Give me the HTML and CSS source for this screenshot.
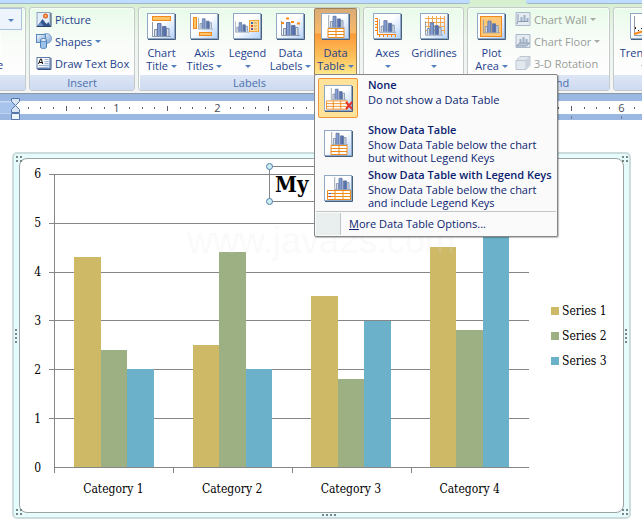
FILE: index.html
```html
<!DOCTYPE html>
<html lang="en">
<head>
<meta charset="utf-8">
<title>Chart Layout</title>
<link rel="stylesheet" href="styles.css">
</head>
<body>
<svg class="defs" aria-hidden="true">
  <defs>
    <linearGradient id="paper" x1="0" y1="0" x2="1" y2="1"><stop offset=".45" stop-color="#fff"/><stop offset="1" stop-color="#b4d2fb"/></linearGradient>
    <linearGradient id="bar" x1="0" y1="0" x2="1" y2="0"><stop offset="0" stop-color="#8fa9dc"/><stop offset="1" stop-color="#4a659f"/></linearGradient>
    <linearGradient id="steel" x1="0" y1="0" x2="1" y2="1"><stop offset="0" stop-color="#f4faff"/><stop offset="1" stop-color="#78a4d2"/></linearGradient>
    <symbol id="tile" viewBox="0 0 29 27">
      <path d="M28.5 1v25.500H1" fill="none" stroke="#48607f"/>
      <rect x=".5" y=".5" width="27" height="25" fill="url(#paper)" stroke="#91a9c6"/>
    </symbol>
    <symbol id="bars" viewBox="0 0 19 15">
      <path d="M.5 0v14.500H19" fill="none" stroke="#8f99a8"/>
      <path d="M2.500 14V7.500H5V14M14.500 14V6.500H17V14" fill="#d8dde6" stroke="#7d8fae"/>
      <path d="M5.500 14V1.500H9V14M10.500 14V4.500H14V14" fill="url(#bar)" stroke="#6277a3"/>
    </symbol>
    <symbol id="cells2" viewBox="0 0 18 10">
      <path d="M1 .5h16v9H1zM1 3.500h16M1 6.500h16M9 .5v9" fill="#fff" stroke="#f08a1c"/>
    </symbol>
    <symbol id="cells3" viewBox="0 0 24 10">
      <path d="M.5 .5h23v9H.5zM.5 3.500h23M.5 6.500h23M8 .5v9M16 .5v9" fill="#fff" stroke="#f08a1c"/>
    </symbol>
  </defs>
</svg>

<header class="ribbon">
  <div class="tab-strip"><span class="tab-edge"></span><span class="active-tab"></span><span class="tab-rest"></span></div>
  <div class="groups">
    <section class="group styles-group">
      <div class="group-body"><button class="combo" aria-label="Element list"><i class="arrow"></i></button><span class="cut-label">e</span></div>
      <h2></h2>
    </section>

    <section class="group insert-group">
      <div class="group-body stack">
        <button class="row-button">
          <svg width="15" height="15" viewBox="0 0 15 15"><rect x=".5" y=".5" width="13" height="13" fill="#e3eefb" stroke="#8fa3bf"/><path d="M14.500 1v13.500H0" fill="none" stroke="#2c4368"/><path d="M1 14l5-7 4 5 2-2 2 4z" fill="#35538f"/><path d="M1 14l3-4 3 4z" fill="#6c8fc4"/><circle cx="9" cy="4" r="2.500" fill="#e8641b"/><circle cx="9" cy="4" r="1" fill="#ffd9a0"/></svg>
          Picture</button>
        <button class="row-button">
          <svg width="16" height="16" viewBox="0 0 16 16"><circle cx="10.500" cy="5.500" r="5" fill="url(#steel)" stroke="#7fa3cc"/><rect x=".5" y="1.500" width="9" height="8" fill="url(#steel)" stroke="#5687bd"/><path d="M4.500 7v7c0 2 6 2 6 0V7" fill="#9dc3ea" stroke="#4b7fb8"/><ellipse cx="7.500" cy="7" rx="3" ry="1.500" fill="#eef7ff" stroke="#4b7fb8"/></svg>
          Shapes <i class="arrow"></i></button>
        <button class="row-button">
          <svg width="15" height="13" viewBox="0 0 15 13"><rect x=".5" y=".5" width="13" height="11" fill="url(#paper)" stroke="#5c7baa"/><path d="M14.500 1v11.500H1" fill="none" stroke="#3b5580"/><path d="M2 7l2-5h1l1 5M3 5.500h3" fill="none" stroke="#111"/><path d="M8 2.500h4M8 4.500h4M8 6.500h4M2 8.500h10M2 10.500h10" stroke="#a3b3cc"/></svg>
          Draw Text Box</button>
      </div>
      <h2>Insert</h2>
    </section>

    <section class="group labels-group">
      <div class="group-body">
        <button class="tall-button">
          <svg width="29" height="27" viewBox="0 0 29 27"><use href="#tile"/><rect x="5.500" y="3.500" width="18" height="4" fill="#ffc465" stroke="#f08a1c"/><use href="#bars" x="5" y="9" width="19" height="15"/></svg>
          <span>Chart</span><span>Title <i class="arrow"></i></span></button>
        <button class="tall-button">
          <svg width="29" height="27" viewBox="0 0 29 27"><use href="#tile"/><rect x="3.500" y="4.500" width="3" height="11" fill="#ffc465" stroke="#f08a1c"/><rect x="9.500" y="19.500" width="12" height="3" fill="#ffc465" stroke="#f08a1c"/><use href="#bars" x="8" y="4" width="15" height="13" preserveAspectRatio="none"/></svg>
          <span>Axis</span><span>Titles <i class="arrow"></i></span></button>
        <button class="tall-button">
          <svg width="29" height="27" viewBox="0 0 29 27"><use href="#tile"/><use href="#bars" x="2" y="7" width="14" height="14" preserveAspectRatio="none"/><rect x="16.500" y="7.500" width="9" height="11" fill="#ffe0a0" stroke="#f3a337"/><path d="M18 9h2v2h-2z" fill="#3468b8"/><path d="M18 12h2v2h-2z" fill="#d24635"/><path d="M18 15h2v2h-2z" fill="#704c9c"/><path d="M21 10h3M21 13h3M21 16h3" stroke="#c99545"/></svg>
          <span>Legend</span><span><i class="arrow"></i></span></button>
        <button class="tall-button">
          <svg width="29" height="27" viewBox="0 0 29 27"><use href="#tile"/><use href="#bars" x="5" y="7" width="19" height="17" preserveAspectRatio="none"/><path d="M5 9h3v2H5zM10 4.500h3v2h-3zM15 8h3v2h-3zM21 9.500h3v2h-3z" fill="#ff8a18"/></svg>
          <span>Data</span><span>Labels <i class="arrow"></i></span></button>
        <div class="menu-anchor">
          <button class="tall-button pressed" aria-expanded="true">
            <svg width="29" height="27" viewBox="0 0 29 27"><use href="#tile"/><use href="#bars" x="7" y="2" width="17" height="13" preserveAspectRatio="none"/><use href="#cells2" x="6" y="15" width="18" height="10"/></svg>
            <span>Data</span><span>Table <i class="arrow"></i></span></button>
          <div class="menu">
            <button class="option">
              <span class="option-icon chosen"><svg width="29" height="27" viewBox="0 0 29 27"><use href="#tile"/><use href="#bars" x="5" y="3" width="19" height="12" preserveAspectRatio="none"/><use href="#cells3" x="2" y="15" width="22" height="10" preserveAspectRatio="none"/><path d="M22 17l6 7M28 17l-6 7" stroke="#e5342c" stroke-width="2"/></svg></span>
              <span class="option-text"><strong>None</strong><span>Do not show a Data Table</span></span>
            </button>
            <button class="option">
              <span class="option-icon"><svg width="29" height="27" viewBox="0 0 29 27"><use href="#tile"/><use href="#bars" x="7" y="2" width="17" height="13" preserveAspectRatio="none"/><use href="#cells2" x="6" y="15" width="18" height="10"/></svg></span>
              <span class="option-text"><strong>Show Data Table</strong><span>Show Data Table below the chart<br>but without Legend Keys</span></span>
            </button>
            <button class="option">
              <span class="option-icon"><svg width="29" height="27" viewBox="0 0 29 27"><use href="#tile"/><use href="#bars" x="10" y="2" width="17" height="13" preserveAspectRatio="none"/><use href="#cells3" x="3" y="15" width="24" height="10"/><path d="M5 18h2v1H5z" fill="#3468b8"/><path d="M5 21h2v1H5z" fill="#b03040"/></svg></span>
              <span class="option-text"><strong>Show Data Table with Legend Keys</strong><span>Show Data Table below the chart<br>and include Legend Keys</span></span>
            </button>
            <button class="more"><span class="gutter"></span><span><u>M</u>ore Data Table Options...</span></button>
          </div>
        </div>
      </div>
      <h2>Labels</h2>
    </section>

    <section class="group axes-group">
      <div class="group-body">
        <button class="tall-button">
          <svg width="29" height="27" viewBox="0 0 29 27"><use href="#tile"/><use href="#bars" x="6" y="6" width="17" height="14" preserveAspectRatio="none"/><path d="M4.500 5v17M4 21.500h19M2 5.500h2M2 8.500h2M2 11.500h2M2 14.500h2M2 17.500h2M6.500 22v2M10.500 22v2M14.500 22v2M18.500 22v2M22.500 22v2" fill="none" stroke="#ff8410"/></svg>
          <span>Axes</span><span><i class="arrow"></i></span></button>
        <button class="tall-button">
          <svg width="29" height="27" viewBox="0 0 29 27"><use href="#tile"/><path d="M5 5.500h20M5 9.500h20M5 13.500h20M5 17.500h20M8.500 3v18M12.500 3v18M16.500 3v18M20.500 3v18M24.500 3v18" stroke="#f5a850"/><use href="#bars" x="5" y="8" width="18" height="15" preserveAspectRatio="none"/></svg>
          <span>Gridlines</span><span><i class="arrow"></i></span></button>
      </div>
      <h2></h2>
    </section>

    <section class="group background-group">
      <div class="group-body">
        <button class="tall-button">
          <svg width="29" height="27" viewBox="0 0 29 27"><use href="#tile"/><rect x="3.500" y="3.500" width="21" height="20" fill="#ffc877" stroke="#f08a1c"/><use href="#bars" x="6" y="6" width="17" height="15" preserveAspectRatio="none"/></svg>
          <span>Plot</span><span>Area <i class="arrow"></i></span></button>
        <div class="stack">
          <button class="row-button" disabled>
            <svg width="15" height="14" viewBox="0 0 15 14"><path d="M.5 .5h14v13H.5z" fill="#e6ebf1" stroke="#a9b8ca"/><path d="M2.500 2v7l-1 3M3 9.500h10" fill="none" stroke="#8698ae"/><path d="M5 9V5h2v4M8 9V3h2v6M11 9V6h2v3" fill="#9fb0c6"/></svg>
            Chart Wall <i class="arrow"></i></button>
          <button class="row-button" disabled>
            <svg width="15" height="14" viewBox="0 0 15 14"><path d="M.5 .5h14v13H.5z" fill="#e6ebf1" stroke="#a9b8ca"/><path d="M4 9h10l-3 3H1z" fill="#c1cbd8" stroke="#8698ae"/><path d="M4 9V5h2v4M7 9V3h2v6M10 9V5h2v4" fill="#9fb0c6"/></svg>
            Chart Floor <i class="arrow"></i></button>
          <button class="row-button" disabled>
            <svg width="15" height="14" viewBox="0 0 15 14"><path d="M.5 4.500l4-4h10v9l-4 4H.5z" fill="#e3e8ee" stroke="#bcc7d4"/><path d="M1 4.500h9.500V13M10.500 4.500l4-4" fill="none" stroke="#bcc7d4"/><path d="M11 5l3-3v7l-3 3z" fill="#c9d2dd"/></svg>
            3-D Rotation</button>
        </div>
      </div>
      <h2>Background</h2>
    </section>

    <section class="group analysis-group">
      <div class="group-body">
        <button class="tall-button">
          <svg width="29" height="27" viewBox="0 0 29 27"><use href="#tile"/><path d="M4.500 3v19.500H25" fill="none" stroke="#8f99a8"/><path d="M4 21l20-6" stroke="#ff8a18" stroke-width="2"/><path d="M5 14h1v2H5zM8 17h1v1H8zM11 15h1v1h-1zM14 18h1v1h-1zM18 12h1v1h-1z" fill="#222"/></svg>
          <span>Trendline</span><span><i class="arrow"></i></span></button>
      </div>
      <h2></h2>
    </section>
  </div>
</header>

<div class="ruler">
  <svg class="indent" width="9" height="22" viewBox="0 0 9 22"><path d="M.5 .5h8v3l-4 4-4-4zM.5 14.500v-3l4-4 4 4v3z" fill="#dbe6f5" stroke="#5478aa"/><path d="M.5 15.500h8v6h-8z" fill="#f0f5fb" stroke="#5478aa"/></svg>
  <div class="scale">
    <span class="half-inch"></span>
    <span class="inch">1</span><span class="inch">2</span><span class="inch"></span><span class="inch"></span><span class="inch tabs"></span><span class="inch tabs">6</span>
  </div>
</div>

<main class="document">
  <figure class="chart-frame">
    <i class="grip corner nw"></i><i class="grip corner ne"></i><i class="grip corner sw"></i><i class="grip corner se"></i>
    <i class="grip side-w"></i><i class="grip side-e"></i><i class="grip side-s"></i>
    <div class="chart">
      <div class="y-axis"><span>6</span><span>5</span><span>4</span><span>3</span><span>2</span><span>1</span><span>0</span></div>
      <div class="plot">
        <div class="gridlines"><i></i><i></i><i></i><i></i><i></i><i></i></div>
        <div class="bars">
          <div class="cluster"><b class="s1" style="height:71.7%"></b><b class="s2" style="height:40%"></b><b class="s3" style="height:33.3%"></b></div>
          <div class="cluster"><b class="s1" style="height:41.500%"></b><b class="s2" style="height:73.3%"></b><b class="s3" style="height:33.3%"></b></div>
          <div class="cluster"><b class="s1" style="height:58.3%"></b><b class="s2" style="height:30%"></b><b class="s3" style="height:50%"></b></div>
          <div class="cluster"><b class="s1" style="height:75%"></b><b class="s2" style="height:46.7%"></b><b class="s3" style="height:83.3%"></b></div>
        </div>
      </div>
      <ul class="legend"><li><b class="s1"></b>Series 1</li><li><b class="s2"></b>Series 2</li><li><b class="s3"></b>Series 3</li></ul>
      <div class="categories"><span>Category 1</span><span>Category 2</span><span>Category 3</span><span>Category 4</span></div>
      <div class="chart-title">My Title<i class="handle top"></i><i class="handle bottom"></i></div>
      <span class="watermark">www.java2s.com</span>
    </div>
  </figure>
</main>
</body>
</html>
```
FILE: styles.css
```css
* { box-sizing: border-box; }
body {
  margin: 0;
  background: #fff;
  color: #000;
  font: 11px/13px "Open Sans", "Noto Sans", sans-serif;
}
button {
  margin: 0;
  padding: 0;
  border: 0;
  background: none;
  color: #1d3f8c;
  font: inherit;
  white-space: nowrap;
}
svg { display: block; flex: none; }
h2, ul, figure { margin: 0; padding: 0; }
.defs { position: absolute; width: 0; height: 0; }
.arrow {
  display: inline-block;
  border: 3px solid transparent;
  border-top-color: #527fbd;
  border-bottom: 0;
  vertical-align: 2px;
}

/* Ribbon */
.ribbon {
  height: 94px;
  overflow-x: clip;
  background: linear-gradient(#d5efcf, #edf5ee 40%, #f3f5f7);
  border-bottom: 1px solid #8d97a5;
}
.tab-strip { display: flex; height: 4px; }
.tab-edge, .tab-rest { background: #bfdbff; border-bottom: 1px solid #9fb8c8; }
.tab-edge { width: 470px; border-radius: 0 0 3px 0; }
.active-tab { width: 56px; background: #d5efcf; }
.tab-rest { flex: 1; border-radius: 0 0 0 3px; }
.groups { display: flex; gap: 3px; padding-top: 3px; }
.group {
  display: flex;
  flex: none;
  flex-direction: column;
  height: 84px;
  border: 1px solid #c3cac8;
  border-radius: 3px;
  background: linear-gradient(#e8fbe9, #fafcfa 45%, #fff);
  box-shadow: inset 0 0 0 1px rgba(255, 255, 255, .6);
}
.group h2 {
  height: 15px;
  background: linear-gradient(#dde6f5, #cddaf0);
  color: #4a70ad;
  font-size: 11px;
  font-weight: 400;
  line-height: 15px;
  text-align: center;
}
.group-body { display: flex; flex: 1; }
.styles-group { width: 26px; border-left: 0; border-radius: 0 3px 3px 0; }
.styles-group .group-body { flex-direction: column; justify-content: space-between; padding-bottom: 4px; }
.combo {
  width: 22px;
  height: 22px;
  border: 1px solid #abc1de;
  border-left: 0;
  background: #edf4fc;
}
.cut-label { color: #1d3f8c; margin-left: -3px; }
.insert-group { width: 106px; }
.labels-group { width: 222px; padding-left: 1px; }
.axes-group { width: 101px; }
.background-group { width: 143px; }
.analysis-group { width: 80px; }
.stack { display: flex; flex-direction: column; }
.insert-group .stack { padding-left: 6px; }
.row-button { display: flex; align-items: center; gap: 3px; height: 22px; }
.row-button svg { width: 16px; }
.row-button:disabled { color: #989c98; }
.row-button:disabled .arrow { border-top-color: #a5a8a5; }
.tall-button {
  display: flex;
  flex-direction: column;
  align-items: center;
  width: 43px;
  height: 67px;
  padding-top: 5px;
}
.tall-button svg { margin-bottom: 6px; }
.tall-button span { height: 13px; }
.axes-group .tall-button { width: 47px; }
.axes-group .tall-button + .tall-button { width: 46px; }
.background-group .tall-button { width: 47px; }
.analysis-group .tall-button { width: 60px; }
.pressed {
  border: 1px solid #9b8259;
  border-bottom: 0;
  border-radius: 2px 2px 0 0;
  padding-top: 4px;
  background: linear-gradient(#d9ab77, #fbb968 36%, #fb9a38 38%, #fdc15b 72%, #ffe98f);
}

/* Drop-down menu */
.menu-anchor { position: relative; margin-left: 2px; }
.menu {
  position: absolute;
  top: 66px;
  left: 0;
  z-index: 3;
  width: 244px;
  padding: 3px 1px 1px;
  border: 1px solid #868686;
  border-radius: 2px;
  background: #fafafa;
  box-shadow: 1px 1px 1px rgba(0, 0, 0, .25);
}
.menu button { color: #0b1d70; text-align: left; }
.option { display: flex; gap: 10px; width: 100%; height: 45px; padding-left: 2px; }
.option:nth-child(3) { height: 43px; }
.option-icon {
  display: flex;
  flex: none;
  align-items: center;
  justify-content: center;
  width: 40px;
  height: 40px;
  border: 1px solid transparent;
}
.chosen { border-color: #f29536; border-radius: 2px; background: #ffe29a; }
.option-text { display: flex; flex-direction: column; gap: 2px; }
.option-text strong { font-weight: 600; line-height: 13px; }
.more {
  display: flex;
  align-items: center;
  gap: 8px;
  width: 100%;
  height: 24px;
  border-top: 1px solid #c5c5c5;
}
.gutter { width: 25px; height: 22px; border-right: 1px solid #c5c5c5; background: #e9eeee; }

/* Ruler */
.ruler {
  position: relative;
  height: 26px;
  padding: 7px 0 6px;
  overflow-x: clip;
  background: linear-gradient(#9ab8e2, #9ab8e2 7px, #d7e4f6 7px, #a9c4ec 9px, #a9c4ec 19px, #d7e4f6 20px, #9ab8e2 20px);
}
.indent { position: absolute; left: 11px; top: 4px; z-index: 1; }
.scale { display: flex; height: 13px; margin-left: 15px; background: #fff; }
.half-inch, .inch {
  flex: none;
  color: #444b58;
  font: 11px/13px "Open Sans", sans-serif;
  text-align: center;
  background:
    linear-gradient(#59606c, #59606c) 0 5px / 1px 5px no-repeat,
    linear-gradient(#59606c, #59606c) 13px 6px / 1px 2px no-repeat,
    linear-gradient(#59606c, #59606c) 25px 6px / 1px 2px no-repeat,
    linear-gradient(#59606c, #59606c) 38px 6px / 1px 2px no-repeat,
    linear-gradient(#59606c, #59606c) 63px 6px / 1px 2px no-repeat,
    linear-gradient(#59606c, #59606c) 76px 6px / 1px 2px no-repeat,
    linear-gradient(#59606c, #59606c) 88px 6px / 1px 2px no-repeat;
}
.half-inch { width: 51px; }
.inch { width: 101px; }
.tabs { position: relative; }
.tabs::after {
  content: "";
  position: absolute;
  top: 15px;
  left: 0;
  width: 100%;
  height: 3px;
  background:
    linear-gradient(#6f7f96, #6f7f96) 0 0 / 1px 3px no-repeat,
    linear-gradient(#6f7f96, #6f7f96) 50% 0 / 1px 3px no-repeat;
}

/* Chart */
.document { padding: 32px 11px 12px 12px; }
.chart-frame {
  position: relative;
  padding: 4px 5px;
  border: 2px solid #ccdcdc;
  border-radius: 5px;
  background: #e6fbfb;
}
.chart {
  position: relative;
  display: grid;
  grid-template-columns: 34px 1fr 94px;
  padding-top: 15px;
  border: 1px solid #9da3a3;
  border-radius: 8px;
  background: #fff;
  font: 12px/16px "DejaVu Serif Condensed", "DejaVu Serif", serif;
}
.y-axis {
  display: flex;
  flex-direction: column;
  justify-content: space-between;
  margin: -8px 13px -8px 0;
  text-align: right;
}
.plot { display: grid; height: 294px; border-left: 1px solid #868686; border-bottom: 1px solid #868686; }
.gridlines, .bars { grid-area: 1 / 1; }
.gridlines { display: grid; grid-template-rows: repeat(6, 1fr); margin-left: -6px; }
.gridlines i { border-top: 1px solid #868686; }
.bars { display: flex; z-index: 1; }
.cluster { display: flex; flex: 1; align-items: flex-end; padding: 0 20px 0 19px; }
.cluster b { flex: 1; }
.s1 { background: #cdb966; }
.s2 { background: #9cb084; }
.s3 { background: #6bb1c9; }
.legend {
  display: flex;
  flex-direction: column;
  justify-content: center;
  gap: 9px;
  padding: 30px 0 0 22px;
  list-style: none;
}
.legend li { display: flex; align-items: center; gap: 3px; white-space: nowrap; }
.legend b { width: 8px; height: 8px; }
.categories {
  grid-column: 2;
  display: flex;
  height: 44px;
  padding-top: 13px;
  background: repeating-linear-gradient(90deg, #868686 0 1px, transparent 1px 119px) 0 0 / 100% 5px no-repeat;
}
.categories span { flex: 1; text-align: center; }
.chart-title {
  position: absolute;
  top: 7px;
  left: 249px;
  z-index: 2;
  padding: 4px 5px;
  border: 1px solid #868686;
  font-size: 22px;
  font-weight: 700;
  line-height: 26px;
}
.handle {
  position: absolute;
  left: -4px;
  width: 7px;
  height: 7px;
  border: 1px solid #4f7da8;
  border-radius: 50%;
  background: #cdebf2;
}
.handle.top { top: -4px; }
.handle.bottom { bottom: -4px; }
.watermark {
  position: absolute;
  top: 62px;
  left: 167px;
  z-index: 2;
  color: rgba(225, 225, 225, .18);
  font: 36px/40px "Liberation Sans", sans-serif;
}
.grip {
  position: absolute;
  background: radial-gradient(circle at 1px 1px, #7a8686 1px, transparent 1px) 0 0 / 4px 4px;
}
.corner { z-index: 1; width: 6px; height: 6px; }
.nw { top: 2px; left: 2px; }
.ne { top: 2px; right: 1px; }
.sw { bottom: 2px; left: 2px; }
.se { bottom: 2px; right: 1px; }
.side-w, .side-e { top: 175px; width: 3px; height: 15px; }
.side-w { left: 1px; }
.side-e { right: 1px; }
.side-s { bottom: 0; left: 50%; width: 15px; height: 3px; }
```
